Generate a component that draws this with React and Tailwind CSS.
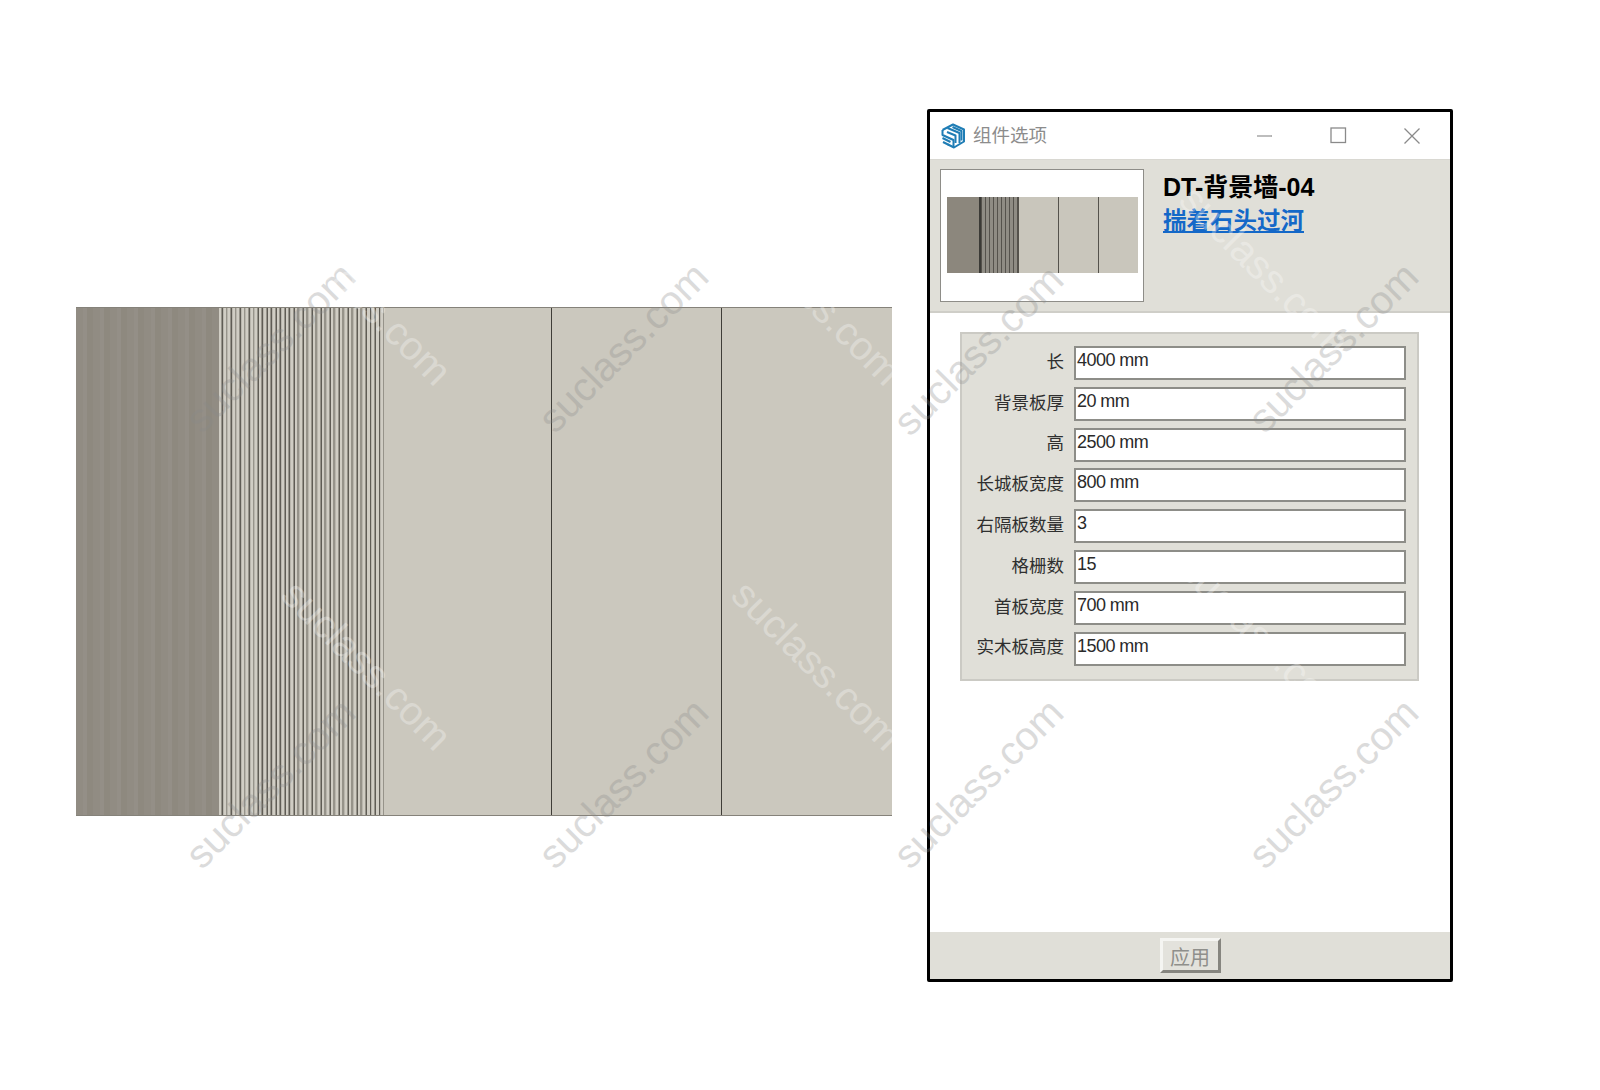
import React from "react";

const cjk = "font-['Liberation_Sans','Noto_Sans_CJK_SC',sans-serif]";

const fields = [
  ["长", "4000 mm"],
  ["背景板厚", "20 mm"],
  ["高", "2500 mm"],
  ["长城板宽度", "800 mm"],
  ["右隔板数量", "3"],
  ["格栅数", "15"],
  ["首板宽度", "700 mm"],
  ["实木板高度", "1500 mm"],
];

// center points of the repeated watermark
const rising = [
  [270, 347], [623, 347], [978, 350], [1333, 347],
  [270, 783], [623, 783], [978, 783], [1333, 783],
];
const falling = [
  [367, 665], [817, 665], [1265, 640],
  [367, 300], [817, 300], [1265, 270],
];

function Watermark({ x, y, angle, light }) {
  return (
    <div
      className={`absolute whitespace-nowrap text-[40px] leading-none font-['Liberation_Sans',sans-serif] ${
        light ? "text-white opacity-30" : "text-[#8a8a8a] opacity-30"
      }`}
      style={{ left: x, top: y, transform: `translate(-50%,-50%) rotate(${angle}deg)` }}
    >
      suclass.com
    </div>
  );
}

function SketchUpLogo() {
  return (
    <svg width="26" height="26" viewBox="0 0 26 26" fill="none" stroke="#1f7db5" strokeWidth="2" strokeLinejoin="round">
      <path d="M2.5 7 L13 1.5 L24 6.5 V18.5 L14 24.5 L8 21.5" />
      <path d="M2.5 7 V12 L13.5 17 V24" />
      <path d="M2.5 15 L10.5 19 M3 19 L9 22" />
      <path d="M7.5 5 L19.5 10 V20" />
      <path d="M12.5 4 L21.5 8 V17.5 M7 9 L15.5 12.5 V20" />
    </svg>
  );
}

function WallStripes() {
  return (
    <div className="w-[165px] bg-[repeating-linear-gradient(90deg,#d0cdc4_0px,#d0cdc4_2px,#96938a_2px,#96938a_3px,#5f5c55_3px,#5f5c55_3.9px,#b9b6ad_3.9px,#b9b6ad_4.5px)]" />
  );
}

function Wall() {
  return (
    <div className="flex w-[816px] h-[509px] mt-[307px] border-t border-b border-[#85827a]">
      <div className="w-[143px] bg-[repeating-linear-gradient(90deg,#918c83_0px,#918c83_7px,#948f87_7px,#948f87_11px,#8e897f_11px,#8e897f_17px)]" />
      <WallStripes />
      <div className="w-[168px] bg-[#cbc8be] border-r border-[#3f3d38]" />
      <div className="w-[170px] bg-[#cbc8be] border-r border-[#3f3d38]" />
      <div className="flex-1 bg-[#cbc8be]" />
    </div>
  );
}

function Thumbnail() {
  return (
    <div className="w-[204px] h-[133px] bg-white border border-[#8e8d88] flex items-start pl-[6px] pr-[5px] pt-[27px]">
      <div className="flex w-full h-[76px]">
        <div className="w-[34px] bg-[#8c877d] border-r-2 border-[#3b3a36]" />
        <div className="w-[38px] bg-[repeating-linear-gradient(90deg,#55524c_0px,#55524c_1.5px,#8f8c84_1.5px,#8f8c84_4px)] border-r border-[#55524c]" />
        <div className="w-[40px] bg-[#c9c6bc] border-r border-[#55524c]" />
        <div className="w-[40px] bg-[#c9c6bc] border-r border-[#55524c]" />
        <div className="flex-1 bg-[#c9c6bc]" />
      </div>
    </div>
  );
}

function Field({ label, value }) {
  return (
    <div className="flex items-center h-[34px]">
      <div className="w-[102px] text-right text-[17.5px] leading-none text-[#2f2f2f] -mt-[1px]">{label}</div>
      <div className="ml-[10px] w-[332px] h-[34px] bg-white border-2 border-[#8d8d88] pl-[1px] text-[18px] leading-[25px] text-[#2a2a2a] tracking-[-0.55px]">
        {value}
      </div>
    </div>
  );
}

function Dialog() {
  return (
    <div className={`w-[526px] h-[873px] mt-[109px] ml-[35px] flex flex-col bg-white border-[3px] border-black rounded-[2px] ${cjk}`}>
      <div className="h-[48px] flex items-center pl-[10px] border-b border-[#d9d8d2]">
        <SketchUpLogo />
        <span className="ml-[7px] text-[18.5px] text-[#8c8c8c]">组件选项</span>
        <div className="ml-auto flex items-center text-[#8a8a8a]">
          <svg width="18" height="18" viewBox="0 0 18 18" stroke="#9a9a9a" strokeWidth="1.3"><path d="M1 9h15" /></svg>
          <svg className="ml-[56px]" width="17" height="17" viewBox="0 0 17 17" fill="none" stroke="#8a8a8a" strokeWidth="1.3"><rect x="1" y="1" width="14.5" height="14.5" /></svg>
          <svg className="ml-[56px] mr-[29px]" width="18" height="18" viewBox="0 0 18 18" stroke="#8a8a8a" strokeWidth="1.3"><path d="M1.5 1.5l15 15M16.5 1.5l-15 15" /></svg>
        </div>
      </div>
      <div className="h-[153px] bg-[#e0dfd8] border-b-2 border-[#cfcec8] flex pl-[10px] pt-[9px]">
        <Thumbnail />
        <div className="ml-[19px] mt-[2px]">
          <div className="text-[25px] leading-[32px] font-bold text-black">DT-背景墙-04</div>
          <a className="block mt-[2px] text-[23.5px] leading-[32px] font-bold text-[#1468c8] underline">揣着石头过河</a>
        </div>
      </div>
      <div className="flex-1 pt-[19px] pl-[30px]">
        <div className="w-[459px] h-[349px] bg-[#e0dfd8] border-2 border-[#cbcac4] pt-[12px] flex flex-col gap-[6.8px]">
          {fields.map(([label, value]) => (
            <Field key={label} label={label} value={value} />
          ))}
        </div>
      </div>
      <div className="h-[47px] bg-[#e0dfd8] flex justify-center pt-[6px]">
        <button className="w-[61px] h-[35px] bg-[#e3e2dc] border-[3px] border-t-[#f5f5f2] border-l-[#f5f5f2] border-r-[#86857f] border-b-[#86857f] text-[20px] leading-none pt-[5px] text-[#8f8f8b]">
          应用
        </button>
      </div>
    </div>
  );
}

export default function App() {
  return (
    <div className="relative w-[1600px] h-[1090px] bg-white overflow-hidden flex items-start pl-[76px]">
      <Wall />
      <Dialog />
      {rising.map(([x, y]) => (
        <Watermark key={`${x}-${y}`} x={x} y={y} angle={-45} />
      ))}
      {falling.map(([x, y]) => (
        <Watermark key={`${x}-${y}`} x={x} y={y} angle={45} light />
      ))}
    </div>
  );
}
